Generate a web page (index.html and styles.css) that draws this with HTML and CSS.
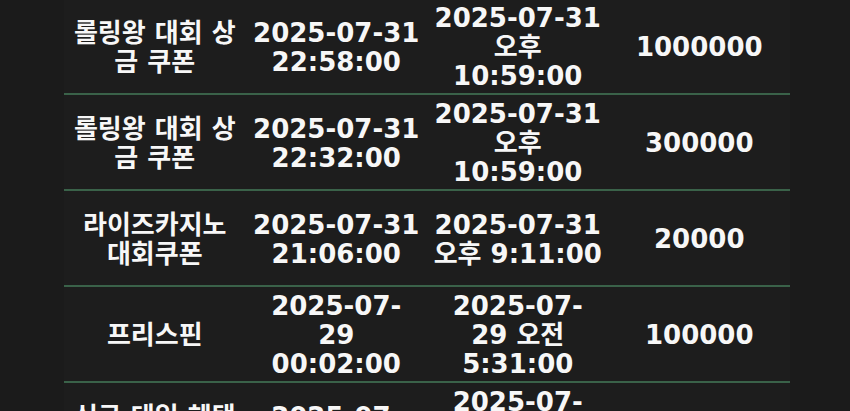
FILE: index.html
```html
<!DOCTYPE html>
<html lang="ko">
<head>
    <meta charset="UTF-8">
    <meta name="viewport" content="width=device-width, initial-scale=1.0">
    <title>쿠폰 내역</title>
    <link rel="stylesheet" href="styles.css">
</head>
<body>

<section id="coupon-history">
    <table class="coupon-table">
        <tbody>
            <tr>
                <td>롤링왕 대회 상<br>금 쿠폰</td>
                <td>2025-07-31<br>22:58:00</td>
                <td>2025-07-31<br>오후<br>10:59:00</td>
                <td>1000000</td>
            </tr>
            <tr>
                <td>롤링왕 대회 상<br>금 쿠폰</td>
                <td>2025-07-31<br>22:32:00</td>
                <td>2025-07-31<br>오후<br>10:59:00</td>
                <td>300000</td>
            </tr>
            <tr>
                <td>라이즈카지노<br>대회쿠폰</td>
                <td>2025-07-31<br>21:06:00</td>
                <td>2025-07-31<br>오후 9:11:00</td>
                <td>20000</td>
            </tr>
            <tr>
                <td>프리스핀</td>
                <td>2025-07-<br>29<br>00:02:00</td>
                <td>2025-07-<br>29 오전<br>5:31:00</td>
                <td>100000</td>
            </tr>
            <tr>
                <td>신규 데일 혜택<br>쿠폰<br>지급</td>
                <td>2025-07-<br>28<br>23:40:00</td>
                <td>2025-07-<br>28<br>오후<br>11:59:00</td>
                <td>50000</td>
            </tr>
        </tbody>
    </table>
</section>

</body>
</html>
```

FILE: styles.css
```css
body {
    font-family: "DejaVu Sans", "Noto Sans CJK KR", sans-serif;
    background-color: #1b1b1b;
    color: #f7f7f7;
    margin: 0;
    padding: 0;
    overflow: hidden;
}

#coupon-history {
    padding: 0 60px 0 64px;
}

.coupon-table {
    width: 726px;
    margin-top: -1px;
    border-collapse: collapse;
    table-layout: fixed;
    background-color: #1d1d1d;
}

.coupon-table td {
    width: 25%;
    height: 87px;
    padding: 5px 0 2px;
    text-align: center;
    vertical-align: middle;
    font-size: 26px;
    font-weight: bold;
    line-height: 29px;
    border-bottom: 2px solid #3a6249;
}
```
